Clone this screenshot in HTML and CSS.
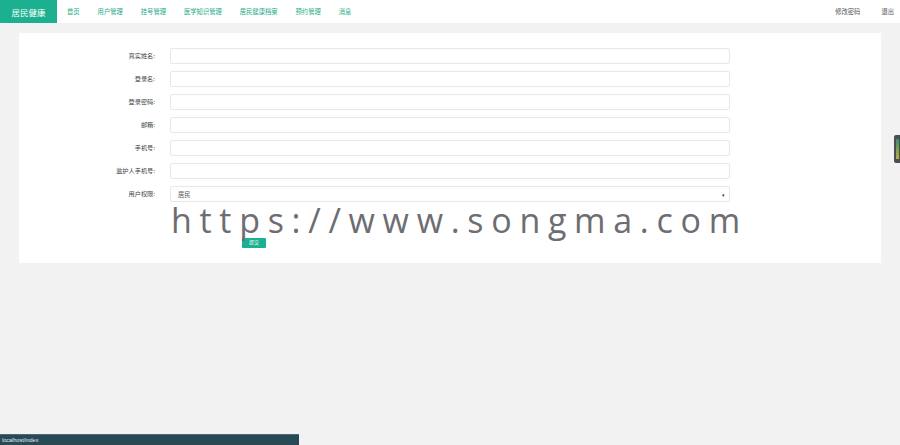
FILE: index.html
```html
<!DOCTYPE html>
<html lang="zh">
<head>
<meta charset="utf-8">
<title>居民健康</title>
<link rel="stylesheet" href="styles.css">
</head>
<body>
<header class="topbar">
  <div class="logo">居民健康</div>
  <nav class="nav">
    <a class="nav-item">首页</a>
    <a class="nav-item">用户管理</a>
    <a class="nav-item">挂号管理</a>
    <a class="nav-item">医学知识管理</a>
    <a class="nav-item">居民健康档案</a>
    <a class="nav-item">预约管理</a>
    <a class="nav-item">消息</a>
  </nav>
  <div class="user-links">
    <a class="user-link">修改密码</a>
    <a class="user-link">退出</a>
  </div>
</header>
<main class="content">
  <section class="card">
    <form class="form">
      <label class="label">真实姓名:</label><input class="field" type="text">
      <label class="label">登录名:</label><input class="field" type="text">
      <label class="label">登录密码:</label><input class="field" type="text">
      <label class="label">邮箱:</label><input class="field" type="text">
      <label class="label">手机号:</label><input class="field" type="text">
      <label class="label">监护人手机号:</label><input class="field" type="text">
      <label class="label">用户权限:</label>
      <div class="field select"><span>居民</span><span class="caret">▾</span></div>
      <span class="label"></span>
      <div class="btn-row"><button class="btn" type="button">提交</button></div>
    </form>
  </section>
</main>
<div class="watermark">https://www.songma.com</div>
<div class="statusbar">localhost/index</div>
<div class="side-widget"><span class="side-bar"></span></div>
</body>
</html>
```
FILE: styles.css
```css
* { box-sizing: border-box; }
html, body { margin: 0; padding: 0; }
body {
  width: 900px;
  height: 445px;
  overflow: hidden;
  background: #f2f2f2;
  font-family: "Noto Sans CJK SC", "Liberation Sans", sans-serif;
  position: relative;
}
.topbar {
  height: 23px;
  background: #fff;
  display: flex;
  align-items: center;
}
.logo {
  width: 57px;
  height: 23px;
  background: #1bb090;
  color: #fff;
  font-size: 8.5px;
  display: flex;
  align-items: center;
  justify-content: center;
}
.nav {
  display: flex;
  padding-left: 1px;
}
.nav-item {
  font-size: 6.3px;
  color: #1aa985;
  padding: 0 9px;
  line-height: 23px;
}
.user-links {
  margin-left: auto;
  display: flex;
  padding-right: 6px;
}
.user-link {
  font-size: 6.3px;
  color: #555;
  padding: 0 9px 0 12px;
  line-height: 23px;
}
.user-link:last-child { padding-right: 0; }
.content {
  padding: 10px 19px 0 19px;
}
.card {
  background: #fff;
  height: 230px;
  padding-top: 15px;
}
.form {
  display: grid;
  grid-template-columns: 136px 560px;
  column-gap: 15px;
  row-gap: 7px;
}
.label {
  font-size: 6.2px;
  color: #444;
  text-align: right;
  line-height: 16px;
  height: 16px;
}
.field {
  height: 16px;
  border: 1px solid #e8e8e8;
  border-radius: 2px;
  background: #fff;
  margin: 0;
  padding: 0;
  outline: none;
}
.select {
  display: flex;
  align-items: center;
  justify-content: space-between;
  padding: 0 4px 0 7px;
  font-size: 6.3px;
  color: #555;
}
.caret { font-size: 5px; color: #333; }
.btn-row {
  padding-top: 29px;
  padding-left: 72px;
}
.btn {
  width: 24px;
  height: 10px;
  border: none;
  border-radius: 1px;
  background: #1bb090;
  color: #fff;
  font-size: 5px;
  padding: 0;
  line-height: 6px;
  display: flex;
  justify-content: center;
  align-items: flex-start;
  padding-top: 1px;
  font-family: "Noto Sans CJK SC", sans-serif;
}
.watermark {
  position: absolute;
  left: 171px;
  top: 196px;
  font-family: "Open Sans", sans-serif;
  font-size: 34px;
  letter-spacing: 7.7px;
  color: #6d6d72;
  line-height: 48px;
  white-space: nowrap;
}
.statusbar {
  position: absolute;
  left: 0;
  bottom: 0;
  width: 299px;
  height: 11px;
  background: #274a56;
  border-top: 1px solid #4d6a74;
  color: #e6eef0;
  font-size: 5.5px;
  line-height: 10px;
  padding-left: 2px;
  font-family: "Liberation Sans", sans-serif;
}
.side-widget {
  position: absolute;
  right: 0;
  top: 135px;
  width: 6px;
  height: 28px;
  background: #4a4f56;
  border-radius: 2px 0 0 2px;
  padding: 4px 0 0 2px;
}
.side-bar {
  display: block;
  width: 3px;
  height: 20px;
  background: linear-gradient(#3a8f6a, #b7b040);
}
```
